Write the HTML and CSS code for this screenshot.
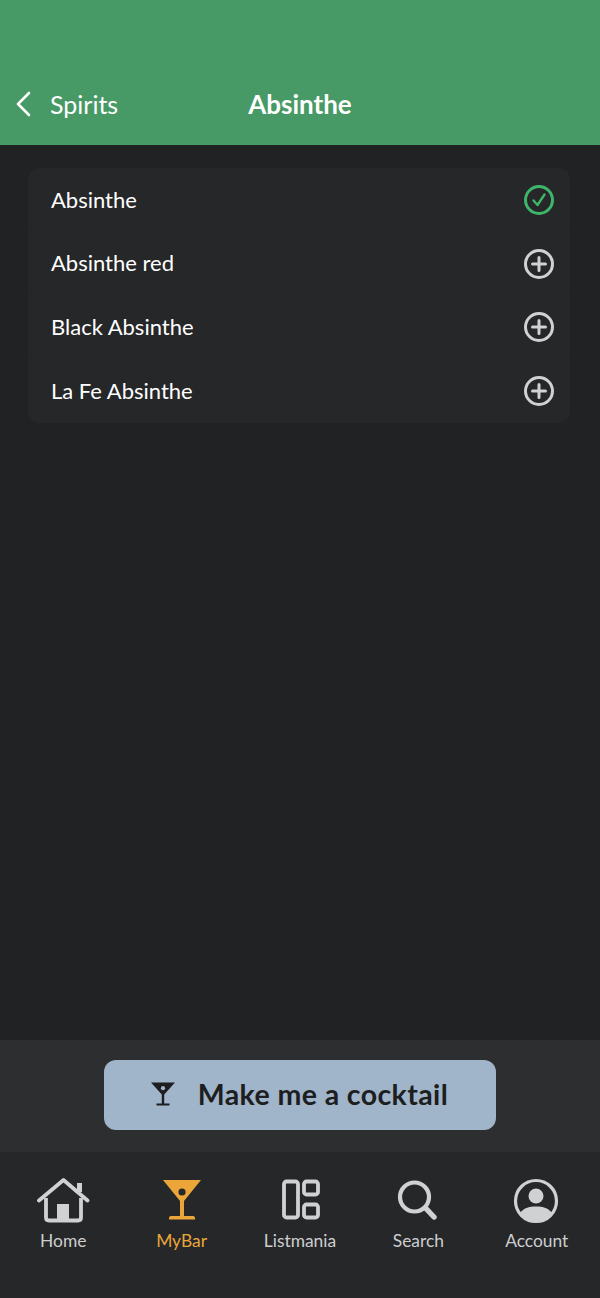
FILE: index.html
```html
<!DOCTYPE html>
<html lang="en">

<head>
    <meta charset="utf-8">
    <meta name="viewport" content="width=device-width, initial-scale=1.0">
    <title>Absinthe</title>
    <link rel="stylesheet" href="styles.css">
</head>

<body>

    <header class="topbar">
        <a class="back">
            <svg class="back-icon" width="16" height="26" viewBox="0 0 16 26">
                <path d="M14 2 L3 13 L14 24" fill="none" stroke="#fff" stroke-width="2.6" stroke-linecap="round" stroke-linejoin="round" />
            </svg>
            <span>Spirits</span>
        </a>
        <h1>Absinthe</h1>
    </header>

    <main class="content">
        <ul class="liste">
            <li class="row">
                <span>Absinthe</span>
                <svg width="32" height="32" viewBox="0 0 32 32">
                    <circle cx="16" cy="16" r="13.5" fill="none" stroke="#3fb56b" stroke-width="3" />
                    <path d="M10.5 16.5 L14.5 21 L21.5 10.5" fill="none" stroke="#3fb56b" stroke-width="2.4" stroke-linecap="round" stroke-linejoin="round" />
                </svg>
            </li>
            <li class="row">
                <span>Absinthe red</span>
                <svg width="32" height="32" viewBox="0 0 32 32">
                    <use href="#plus" />
                </svg>
            </li>
            <li class="row">
                <span>Black Absinthe</span>
                <svg width="32" height="32" viewBox="0 0 32 32">
                    <use href="#plus" />
                </svg>
            </li>
            <li class="row">
                <span>La Fe Absinthe</span>
                <svg width="32" height="32" viewBox="0 0 32 32">
                    <use href="#plus" />
                </svg>
            </li>
        </ul>
    </main>

    <div class="cta">
        <button class="make">
            <svg width="26" height="26" viewBox="0 0 26 26">
                <path d="M1 1.5 H25 L14.2 13.5 V22.6 H19.5 V24.5 H6.5 V22.6 H11.8 V13.5 Z" fill="#1d1e20" />
                <circle cx="13" cy="7.2" r="2.1" fill="#a0b4ca" />
            </svg>
            <span>Make me a cocktail</span>
        </button>
    </div>

    <nav class="tabs">
        <a class="tab">
            <svg width="54" height="48" viewBox="0 0 54 48">
                <path d="M3 23.5 L27.5 3 L51.5 23.5" fill="none" stroke="#d0d1d3" stroke-width="3.8" stroke-linecap="round" stroke-linejoin="round" />
                <path d="M43.5 6 V15" fill="none" stroke="#d0d1d3" stroke-width="5" />
                <path d="M10 21 V40.5 Q10 43.5 13 43.5 H42 Q45 43.5 45 40.5 V21" fill="none" stroke="#d0d1d3" stroke-width="3.8" />
                <rect x="21" y="27" width="12" height="17" fill="#d0d1d3" />
            </svg>
            <span>Home</span>
        </a>
        <a class="tab active">
            <svg width="54" height="48" viewBox="0 0 54 48">
                <path d="M8 3 H46 L29 24 V39 H38 Q40 39 40 41 V42.5 H14 V41 Q14 39 16 39 H25 V24 Z" fill="#eba539" />
                <circle cx="27" cy="15" r="3.6" fill="#26272a" />
            </svg>
            <span>MyBar</span>
        </a>
        <a class="tab">
            <svg width="54" height="48" viewBox="0 0 54 48">
                <rect x="11" y="4.5" width="14" height="36" rx="2.5" fill="none" stroke="#d0d1d3" stroke-width="3.8" />
                <rect x="31" y="4.5" width="14" height="13" rx="2.5" fill="none" stroke="#d0d1d3" stroke-width="3.8" />
                <rect x="31" y="27.5" width="14" height="13" rx="2.5" fill="none" stroke="#d0d1d3" stroke-width="3.8" />
            </svg>
            <span>Listmania</span>
        </a>
        <a class="tab">
            <svg width="54" height="48" viewBox="0 0 54 48">
                <circle cx="23.5" cy="20" r="14.5" fill="none" stroke="#d0d1d3" stroke-width="4.2" />
                <path d="M34.5 31 L43 40" fill="none" stroke="#d0d1d3" stroke-width="5.4" stroke-linecap="round" />
            </svg>
            <span>Search</span>
        </a>
        <a class="tab">
            <svg width="54" height="48" viewBox="0 0 54 48">
                <circle cx="26" cy="24" r="20.5" fill="none" stroke="#d0d1d3" stroke-width="3.2" />
                <circle cx="26" cy="19" r="7.5" fill="#d0d1d3" />
                <path d="M10.5 36 C13 31 19 29.5 26 29.5 C33 29.5 39 31 41.5 36 C38 41 32 44 26 44 C20 44 14 41 10.5 36 Z" fill="#d0d1d3" />
            </svg>
            <span>Account</span>
        </a>
    </nav>

    <svg class="defs" width="0" height="0">
        <defs>
            <g id="plus">
                <circle cx="16" cy="16" r="13.5" fill="none" stroke="#d0d1d3" stroke-width="3" />
                <path d="M16 9.5 V22.5 M9.5 16 H22.5" fill="none" stroke="#d0d1d3" stroke-width="3" stroke-linecap="round" />
            </g>
        </defs>
    </svg>

</body>

</html>
```

FILE: styles.css
```css
* {
    box-sizing: border-box;
}

body {
    margin: 0;
    padding: 0;
    width: 600px;
    height: 1298px;
    display: flex;
    flex-direction: column;
    background-color: #212224;
    color: #fff;
    font-family: "Lato", "Open Sans", sans-serif;
}

.topbar {
    height: 145px;
    background-color: #479a65;
    display: flex;
    align-items: center;
    justify-content: center;
    padding-top: 63px;
    position: relative;
}

.topbar h1 {
    margin: 0;
    font-size: 26px;
    font-weight: 700;
}

.back {
    position: absolute;
    left: 15px;
    top: 89px;
    display: flex;
    align-items: center;
    gap: 19px;
    font-size: 25px;
    font-weight: 400;
}

.content {
    flex: 1;
    padding: 23px 30px 0 28px;
}

.liste {
    list-style: none;
    margin: 0;
    padding: 0 0 1px;
    background-color: #262729;
    border-radius: 12px;
}

.row {
    height: 63.5px;
    padding: 0 15px 0 23px;
    display: flex;
    align-items: center;
    justify-content: space-between;
    font-size: 22px;
    border-bottom: 1px solid #242527;
}

.row svg {
    margin-top: 2px;
}

.row:last-child {
    border-bottom: none;
}

.cta {
    height: 112px;
    background-color: #2d2e30;
    padding: 20px 104px 0;
}

.make {
    width: 392px;
    height: 70px;
    background-color: #a0b4ca;
    border: none;
    border-radius: 12px;
    display: flex;
    align-items: center;
    justify-content: center;
    gap: 22px;
    padding: 0 2px 0 0;
    color: #1d1e20;
    font-family: inherit;
    font-size: 28.5px;
    font-weight: 700;
    letter-spacing: 0.4px;
}

.make span {
    margin-bottom: 2px;
}

.make svg {
    margin-top: -2px;
}

.tabs {
    height: 146px;
    background-color: #262729;
    display: flex;
    padding: 25px 4px 0;
    justify-content: space-between;
}

.tab {
    width: 118.4px;
    display: flex;
    flex-direction: column;
    align-items: center;
    gap: 5px;
    color: #cdced0;
    font-size: 17.4px;
}

.tab svg {
    display: block;
}

.active {
    color: #eba539;
}

.defs {
    position: absolute;
}
```
